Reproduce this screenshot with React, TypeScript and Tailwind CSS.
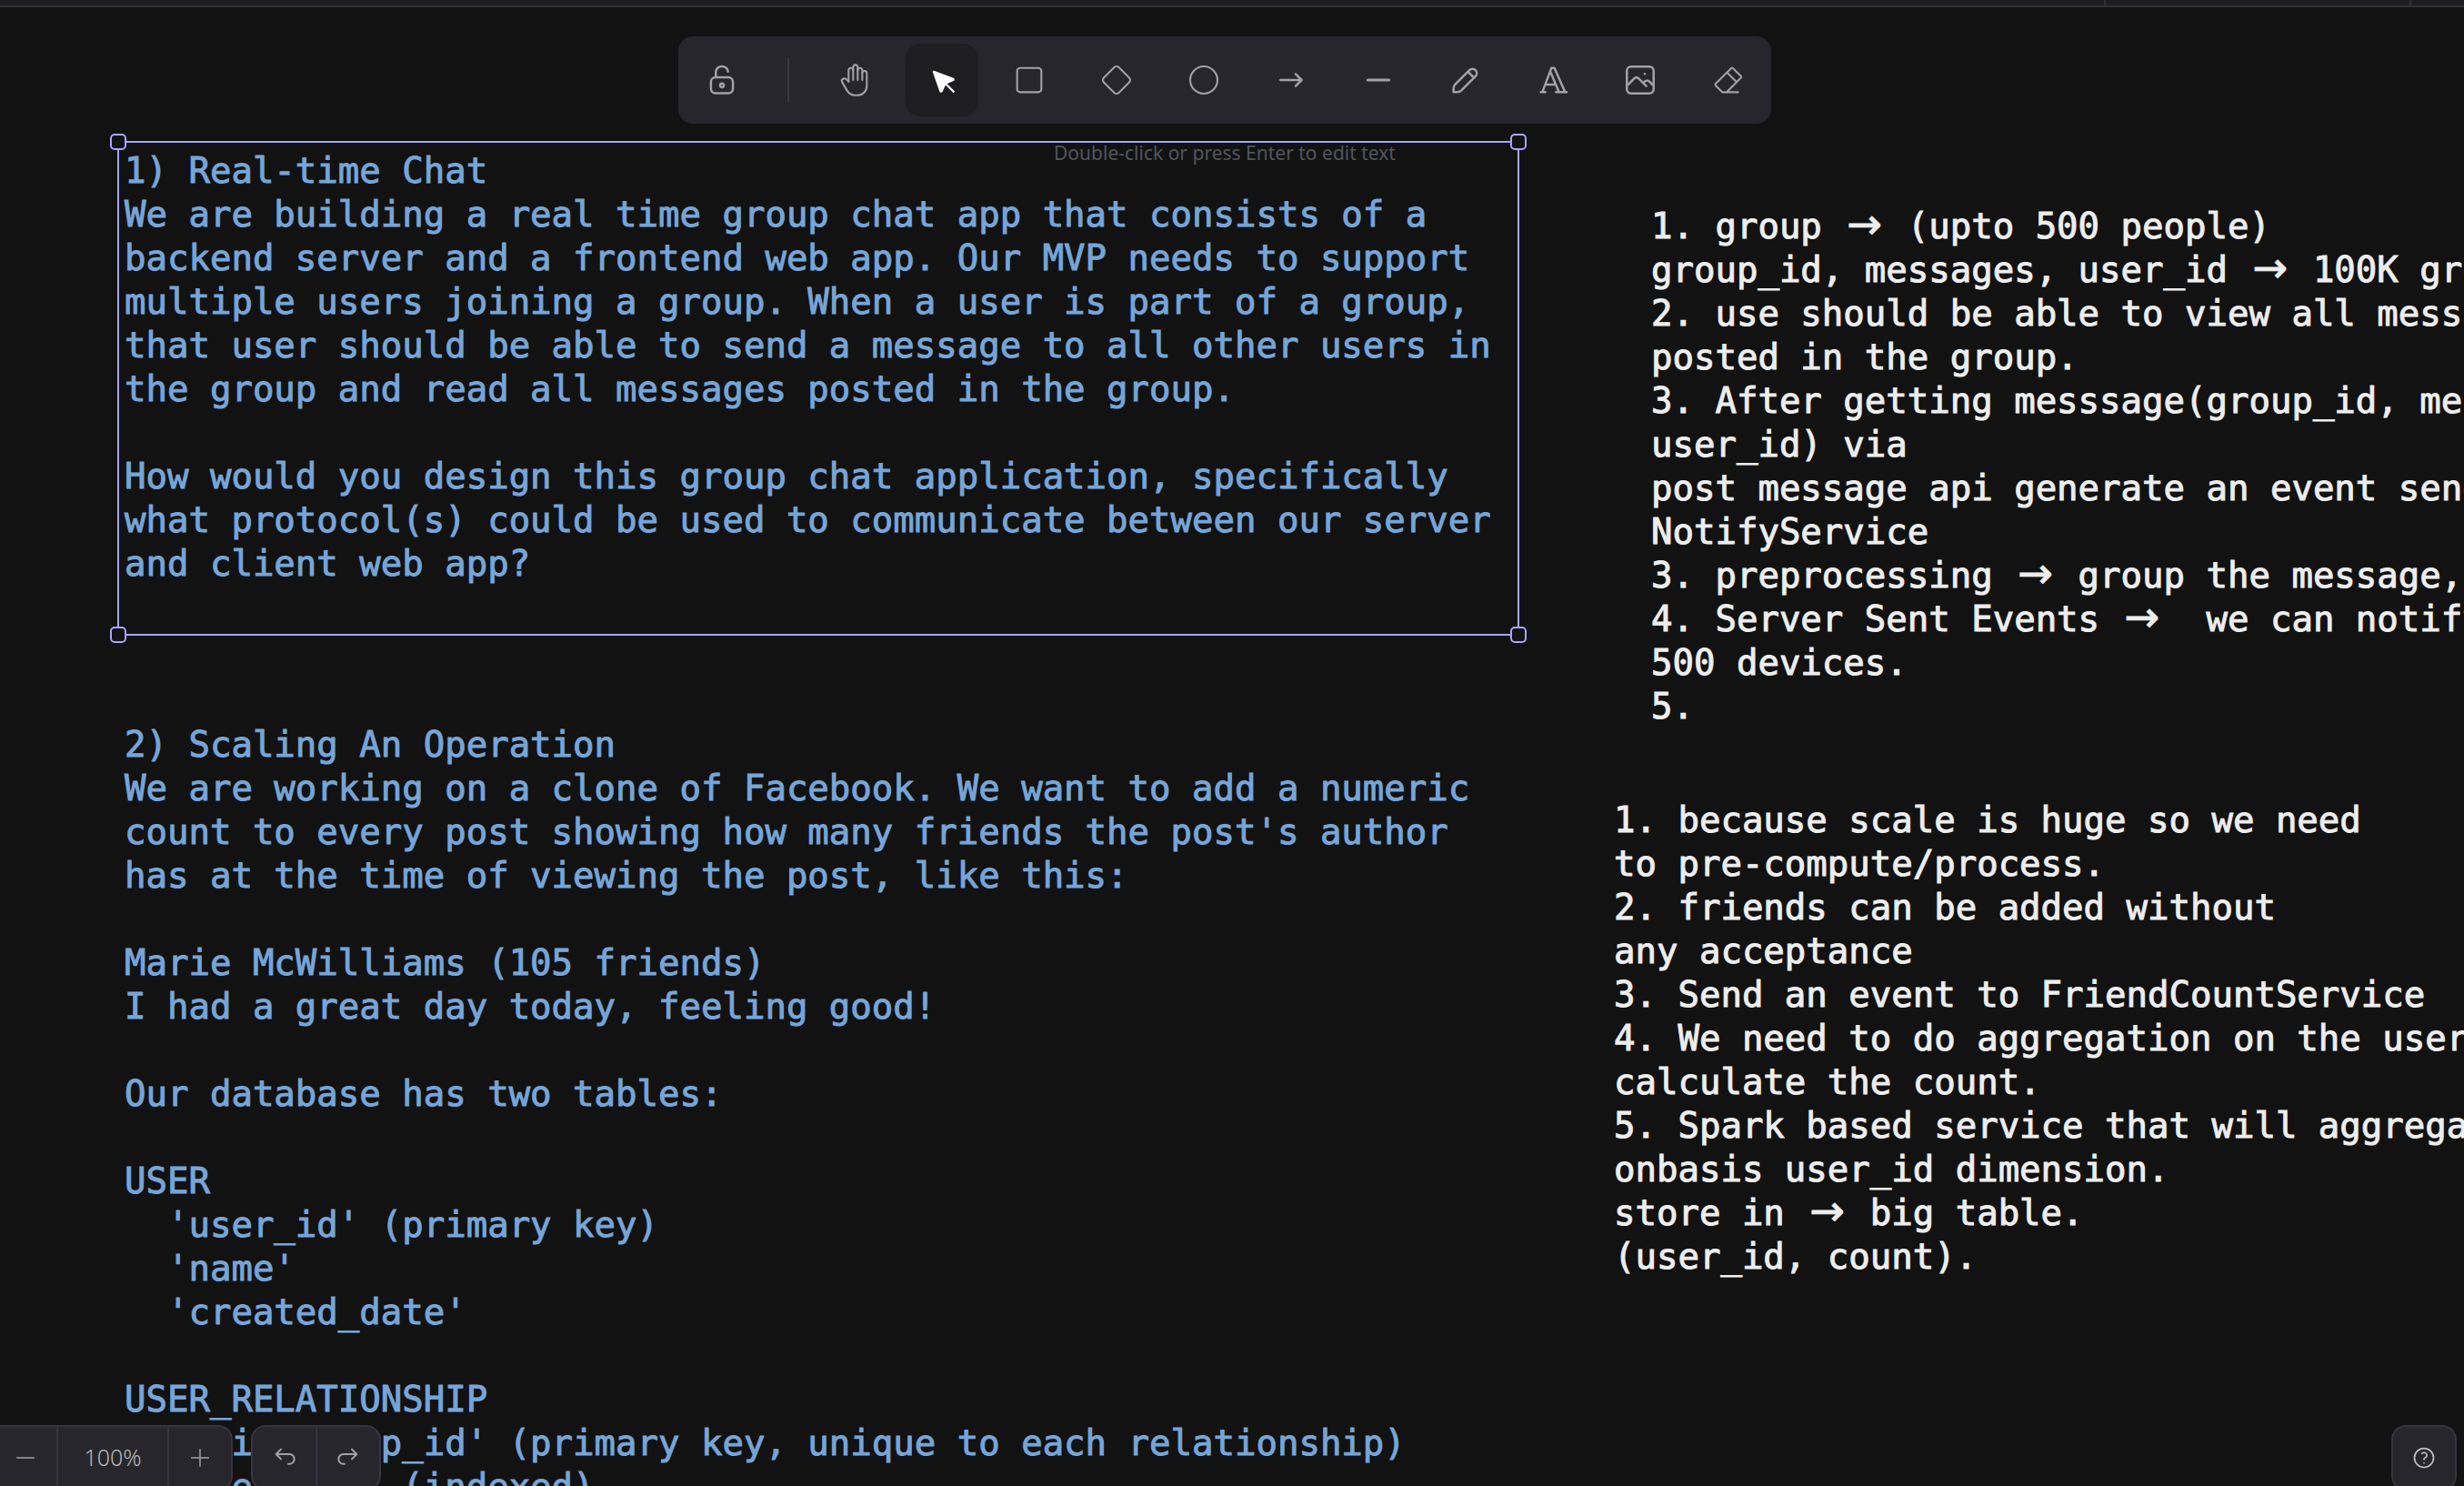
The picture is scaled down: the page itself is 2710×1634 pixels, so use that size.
import React, { ReactNode } from "react";

type Tool = { name: string; icon: ReactNode };

const Glyph = ({ children, view = 24, size = "size-10", width = 1.25 }: { children: ReactNode; view?: number; size?: string; width?: number }) => (
  <svg viewBox={`0 0 ${view} ${view}`} className={size} fill="none" stroke="currentColor" strokeWidth={width} strokeLinecap="round" strokeLinejoin="round" aria-hidden="true">
    {children}
  </svg>
);

const tools: Tool[] = [
  {
    name: "Hand",
    icon: (
      <Glyph>
        <path d="M8 13v-7.5a1.5 1.5 0 0 1 3 0v6.5" />
        <path d="M11 5.5v-2a1.5 1.5 0 1 1 3 0v8.5" />
        <path d="M14 5.5a1.5 1.5 0 0 1 3 0v6.5" />
        <path d="M17 7.5a1.5 1.5 0 0 1 3 0v8.5a6 6 0 0 1 -6 6h-2h.208a6 6 0 0 1 -5.012 -2.7a69.74 69.74 0 0 1 -.196 -.3c-.312 -.479 -1.407 -2.388 -3.286 -5.728a1.5 1.5 0 0 1 .536 -2.022a1.867 1.867 0 0 1 2.28 .28l1.47 1.47" />
      </Glyph>
    ),
  },
  {
    name: "Selection",
    icon: (
      <Glyph view={22}>
        <path d="M6 6l4.153 11.793a0.365 .365 0 0 0 .331 .207a0.366 .366 0 0 0 .332 -.207l2.184 -4.793l4.787 -1.994a0.355 .355 0 0 0 .213 -.323a0.355 .355 0 0 0 -.213 -.323l-11.787 -4.36z" fill="currentColor" />
        <path d="M13.5 13.5l4.5 4.5" />
      </Glyph>
    ),
  },
  { name: "Rectangle", icon: <Glyph><rect x="4" y="4" width="16" height="16" rx="2" /></Glyph> },
  { name: "Diamond", icon: <Glyph><path d="M10.5 20.4l-6.9-6.9c-.781-.781-.781-2.219 0-3l6.9-6.9c.781-.781 2.219-.781 3 0l6.9 6.9c.781.781.781 2.219 0 3l-6.9 6.9c-.781.781-2.219.781-3 0z" /></Glyph> },
  { name: "Ellipse", icon: <Glyph><circle cx="12" cy="12" r="9" /></Glyph> },
  { name: "Arrow", icon: <Glyph width={1.5}><path d="M5 12h14M15 16l4-4M15 8l4 4" /></Glyph> },
  { name: "Line", icon: <Glyph width={1.8}><path d="M5 12h14" /></Glyph> },
  { name: "Draw", icon: <Glyph view={20}><path d="m7.643 15.69 7.774-7.773a2.357 2.357 0 1 0-3.334-3.334L4.31 12.357a3.333 3.333 0 0 0-.977 2.357v1.953h1.953c.884 0 1.732-.352 2.357-.977ZM11.25 5.417l3.333 3.333" /></Glyph> },
  { name: "Text", icon: <Glyph width={1.5}><path d="M4 20h3M14 20h7M6.9 15h6.9M10.2 6.3L16 20M5 20l6-16h2l7 16" /></Glyph> },
  { name: "Image", icon: <Glyph view={20}><path d="M12.5 6.667h.01M4.91 2.625h10.18a2.284 2.284 0 0 1 2.285 2.284v10.182a2.284 2.284 0 0 1-2.284 2.284H4.909a2.284 2.284 0 0 1-2.284-2.284V4.909a2.284 2.284 0 0 1 2.284-2.284Z" /><path d="m3.333 12.5 3.334-3.333c.773-.745 1.726-.745 2.5 0l4.166 4.166" /><path d="m11.667 11.667.833-.834c.774-.744 1.726-.744 2.5 0l1.667 1.667" /></Glyph> },
  { name: "Eraser", icon: <Glyph><path d="M19 20h-10.5l-4.21 -4.3a1 1 0 0 1 0 -1.41l10 -10a1 1 0 0 1 1.41 0l5 5a1 1 0 0 1 0 1.41l-9.2 9.3M18 13.3l-6.3 -6.3" /></Glyph> },
];

const question1 = `1) Real-time Chat
We are building a real time group chat app that consists of a
backend server and a frontend web app. Our MVP needs to support
multiple users joining a group. When a user is part of a group,
that user should be able to send a message to all other users in
the group and read all messages posted in the group.

How would you design this group chat application, specifically
what protocol(s) could be used to communicate between our server
and client web app?`;

const question2 = `2) Scaling An Operation
We are working on a clone of Facebook. We want to add a numeric
count to every post showing how many friends the post's author
has at the time of viewing the post, like this:

Marie McWilliams (105 friends)
I had a great day today, feeling good!

Our database has two tables:

USER
  'user_id' (primary key)
  'name'
  'created_date'

USER_RELATIONSHIP
  'friendship_id' (primary key, unique to each relationship)
  'user1_id' (indexed)`;

const answer1 = `1. group → (upto 500 people)
group_id, messages, user_id → 100K groups
2. use should be able to view all messages
posted in the group.
3. After getting messsage(group_id, message,
user_id) via
post message api generate an event send to
NotifyService
3. preprocessing → group the message,
4. Server Sent Events →  we can notify
500 devices.
5.`;

const answer2 = `1. because scale is huge so we need
to pre-compute/process.
2. friends can be added without
any acceptance
3. Send an event to FriendCountService
4. We need to do aggregation on the user to
calculate the count.
5. Spark based service that will aggregate
onbasis user_id dimension.
store in → big table.
(user_id, count).`;

/* Monospaced canvas text; an arrow takes up two character cells. */
function CanvasText({ text, className }: { text: string; className: string }) {
  return (
    <p className={`font-['DejaVu_Sans_Mono',monospace] text-[39px] leading-[48px] whitespace-pre [-webkit-text-stroke:1px_currentColor] ${className}`}>
      {text.split("→").map((part, i) => (
        <React.Fragment key={i}>
          {i > 0 && (
            <span className="inline-block w-[2ch] text-center leading-[0]">
              <span className="font-['DejaVu_Sans',sans-serif] text-[46px] leading-[0]">→</span>
            </span>
          )}
          {part}
        </React.Fragment>
      ))}
    </p>
  );
}

const handle = "absolute size-[18px] rounded-[5px] border-2 border-[#a8a5ff] bg-[#121212]";
const panel = "border-2 border-[#363541] bg-[#27262c]";

export default function App() {
  return (
    <div className="relative flex h-screen flex-col overflow-hidden bg-[#121212] font-['Noto_Sans',sans-serif] text-[#a2a1a8]">
      <header className="flex h-2 shrink-0 justify-end border-b-2 border-[#313036] bg-[#1e1e21]">
        <div className="w-[336px] border-l-2 border-[#313036]" />
        <div className="w-[60px] border-l-2 border-[#313036]" />
      </header>

      <main className="relative flex-1">
        <section className="absolute top-[147px] left-[129px] h-[544px] w-[1542px] border-2 border-[#a8a5ff]">
          <CanvasText text={question1} className="pt-[7px] pl-1.5 text-[#76a5d8]" />
          <span className={`${handle} -top-[10px] -left-[10px]`} />
          <span className={`${handle} -top-[10px] -right-[10px]`} />
          <span className={`${handle} -bottom-[10px] -left-[10px]`} />
          <span className={`${handle} -right-[10px] -bottom-[10px]`} />
        </section>
        <CanvasText text={question2} className="absolute top-[787px] left-[137px] text-[#76a5d8]" />
        <CanvasText text={answer1} className="absolute top-[217px] left-[1816px] text-[#ededed]" />
        <CanvasText text={answer2} className="absolute top-[870px] left-[1775px] text-[#ededed]" />
      </main>

      <div className="absolute inset-x-0 top-10 flex flex-col items-center pr-4">
        <nav aria-label="Tools" className="flex h-24 items-center gap-4 rounded-2xl bg-[#27262c] px-2">
          <button aria-label="Keep selected tool active" className="flex size-20 items-center justify-center">
            <Glyph view={20}>
              <path d="M13.542 8.542H6.458a2.5 2.5 0 0 0-2.5 2.5v3.75a2.5 2.5 0 0 0 2.5 2.5h7.084a2.5 2.5 0 0 0 2.5-2.5v-3.75a2.5 2.5 0 0 0-2.5-2.5Z" />
              <path d="M10 13.958a1.042 1.042 0 1 0 0-2.083 1.042 1.042 0 0 0 0 2.083Z" />
              <path d="M6.667 8.333V5.417C6.667 3.806 8.159 2.5 10 2.5c1.841 0 3.333 1.306 3.333 2.917" />
            </Glyph>
          </button>
          <span className="mx-4 h-12 w-0.5 bg-[#3a393f]" />
          <div className="flex gap-4">
            {tools.map((t) => (
              <button
                key={t.name}
                aria-label={t.name}
                aria-pressed={t.name === "Selection"}
                className="flex size-20 items-center justify-center rounded-2xl aria-pressed:bg-[#1e1e20] aria-pressed:text-white"
              >
                {t.icon}
              </button>
            ))}
          </div>
        </nav>
        <p className="mt-4 text-[21px] leading-8 text-[#52545e]">Double-click or press Enter to edit text</p>
      </div>

      <footer className="absolute inset-x-0 -bottom-[5px] flex items-start">
        <div className={`-ml-4 flex h-[72px] rounded-2xl ${panel}`}>
          <button aria-label="Zoom out" className="flex w-[76px] items-center justify-center pl-2"><Glyph size="size-7"><path d="M4 12h16" /></Glyph></button>
          <button aria-label="Reset zoom" className="w-[124px] border-x-2 border-[#363541] text-[25px] font-light text-[#b8b8b8]">100%</button>
          <button aria-label="Zoom in" className="flex w-[68px] items-center justify-center"><Glyph size="size-7"><path d="M4 12h16M12 4v16" /></Glyph></button>
        </div>
        <div className={`ml-5 flex h-[72px] rounded-2xl ${panel}`}>
          <button aria-label="Undo" className="flex w-[69px] items-center justify-center"><Glyph view={20} size="size-8"><path d="M7.5 10.833 4.167 7.5 7.5 4.167M4.167 7.5h9.166a3.333 3.333 0 0 1 0 6.667H12.5" /></Glyph></button>
          <button aria-label="Redo" className="flex w-[70px] items-center justify-center border-l-2 border-[#363541]"><Glyph view={20} size="size-8"><path d="M12.5 10.833 15.833 7.5 12.5 4.167M15.833 7.5H6.667a3.333 3.333 0 1 0 0 6.667H7.5" /></Glyph></button>
        </div>
        <button aria-label="Help" className={`mr-2 ml-auto flex size-[72px] items-center justify-center rounded-2xl text-[#bcbcbc] ${panel}`}>
          <Glyph size="size-7" width={1.5}><circle cx="12" cy="12" r="9" /><path d="M12 17v.01" /><path d="M12 13.5a1.5 1.5 0 0 1 1 -1.5a2.6 2.6 0 1 0 -3 -4" /></Glyph>
        </button>
      </footer>
    </div>
  );
}
